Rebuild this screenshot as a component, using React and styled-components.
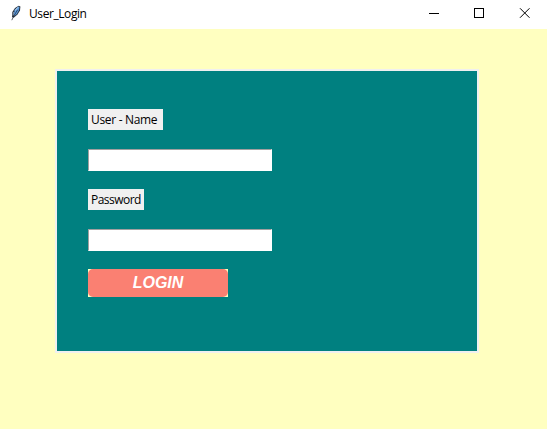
import React from "react";
import styled, { createGlobalStyle } from "styled-components";

const GlobalStyle = createGlobalStyle`
  * { box-sizing: border-box; }
  body { margin: 0; overflow: hidden; background: #ffffc0; }
`;

const Window = styled.div`
  width: 547px;
  height: 429px;
  display: flex;
  flex-direction: column;
  background: #ffffc0;
  font-family: "Open Sans", "Noto Sans", sans-serif;
  font-size: 12px;
  color: #000;
`;

const TitleBar = styled.header`
  height: 29px;
  flex: none;
  display: flex;
  align-items: center;
  padding: 0 0 3px 8px;
  background: #fff;
`;

const Title = styled.span`
  margin-left: 5px;
  line-height: 16px;
  letter-spacing: -0.42px;
  padding-top: 2px;
`;

const Controls = styled.div`
  display: flex;
  margin-left: auto;
`;

const ControlButton = styled.button`
  width: 45px;
  height: 26px;
  padding: 0;
  border: 0;
  background: none;
  display: flex;
  align-items: center;
  justify-content: center;
`;

const Content = styled.main`
  flex: 1;
  padding: 40px 0 0 55px;
`;

const LoginPanel = styled.form`
  width: 424px;
  height: 284px;
  padding: 38px 0 0 31px;
  display: flex;
  flex-direction: column;
  align-items: flex-start;
  border: 2px solid #f0f0f0;
  background: #008080;
`;

const Label = styled.label`
  width: ${(p) => p.$width}px;
  height: 21px;
  padding-left: 3px;
  line-height: 22px;
  letter-spacing: ${(p) => p.$spacing}px;
  white-space: nowrap;
  background: #f0f0f0;
`;

const Entry = styled.input`
  width: 184px;
  height: 22px;
  margin: 19px 0 18px;
  padding: 0 3px;
  border: 1px solid #fff;
  border-top-color: #a0a0a0;
  border-left-color: #a0a0a0;
  border-radius: 0;
  outline: none;
  background: #fff;
`;

const ButtonBacking = styled.div`
  width: 140px;
  height: 28px;
  background: #ffffc0;
`;

const LoginButton = styled.button`
  display: block;
  width: 100%;
  height: 100%;
  padding: 0;
  border: 0;
  border-radius: 5px;
  background: #fa8072;
  color: #fff;
  font: italic bold 16px/28px "Liberation Sans", Arial, sans-serif;
`;

const Feather = () => (
  <svg width="16" height="16" viewBox="0 0 16 16">
    <path d="M4 12 4.3 7 7 3 10.7.7 12.4 1.5 12 5.5 9.5 9.5 5.7 12.7Z" fill="#2b3440" />
    <path d="M5.6 9.4 7 4.6 10.3 1.6 11.5 2.3 10.8 5.4 8.8 9 6.2 11Z" fill="#5a9ade" />
    <path d="M7 5.6 10 2.3" stroke="#c4daee" strokeWidth="1" />
    <path d="M3.8 15.2 5.5 11.5 9.6 4.8" stroke="#202833" strokeWidth=".7" fill="none" />
    <path d="M5 10.5 5.6 7" stroke="#9aa5b2" strokeWidth=".8" />
  </svg>
);

export default function App() {
  return (
    <>
      <GlobalStyle />
      <Window>
        <TitleBar>
          <Feather />
          <Title>User_Login</Title>
          <Controls>
            <ControlButton type="button" aria-label="Minimize">
              <svg width="11" height="11" shapeRendering="crispEdges">
                <path d="M0 5.5H10" stroke="#000" />
              </svg>
            </ControlButton>
            <ControlButton type="button" aria-label="Maximize">
              <svg width="11" height="11" shapeRendering="crispEdges">
                <rect x=".5" y=".5" width="9" height="9" fill="none" stroke="#000" />
              </svg>
            </ControlButton>
            <ControlButton type="button" aria-label="Close">
              <svg width="11" height="11">
                <path d="M1 .25 10.5 9.75M10.5 .25 1 9.75" stroke="#000" strokeWidth="1" />
              </svg>
            </ControlButton>
          </Controls>
        </TitleBar>
        <Content>
          <LoginPanel onSubmit={(e) => e.preventDefault()}>
            <Label htmlFor="user" $width={75} $spacing={-0.32}>User - Name</Label>
            <Entry id="user" />
            <Label htmlFor="password" $width={56} $spacing={-0.52}>Password</Label>
            <Entry id="password" type="password" />
            <ButtonBacking>
              <LoginButton>LOGIN</LoginButton>
            </ButtonBacking>
          </LoginPanel>
        </Content>
      </Window>
    </>
  );
}
